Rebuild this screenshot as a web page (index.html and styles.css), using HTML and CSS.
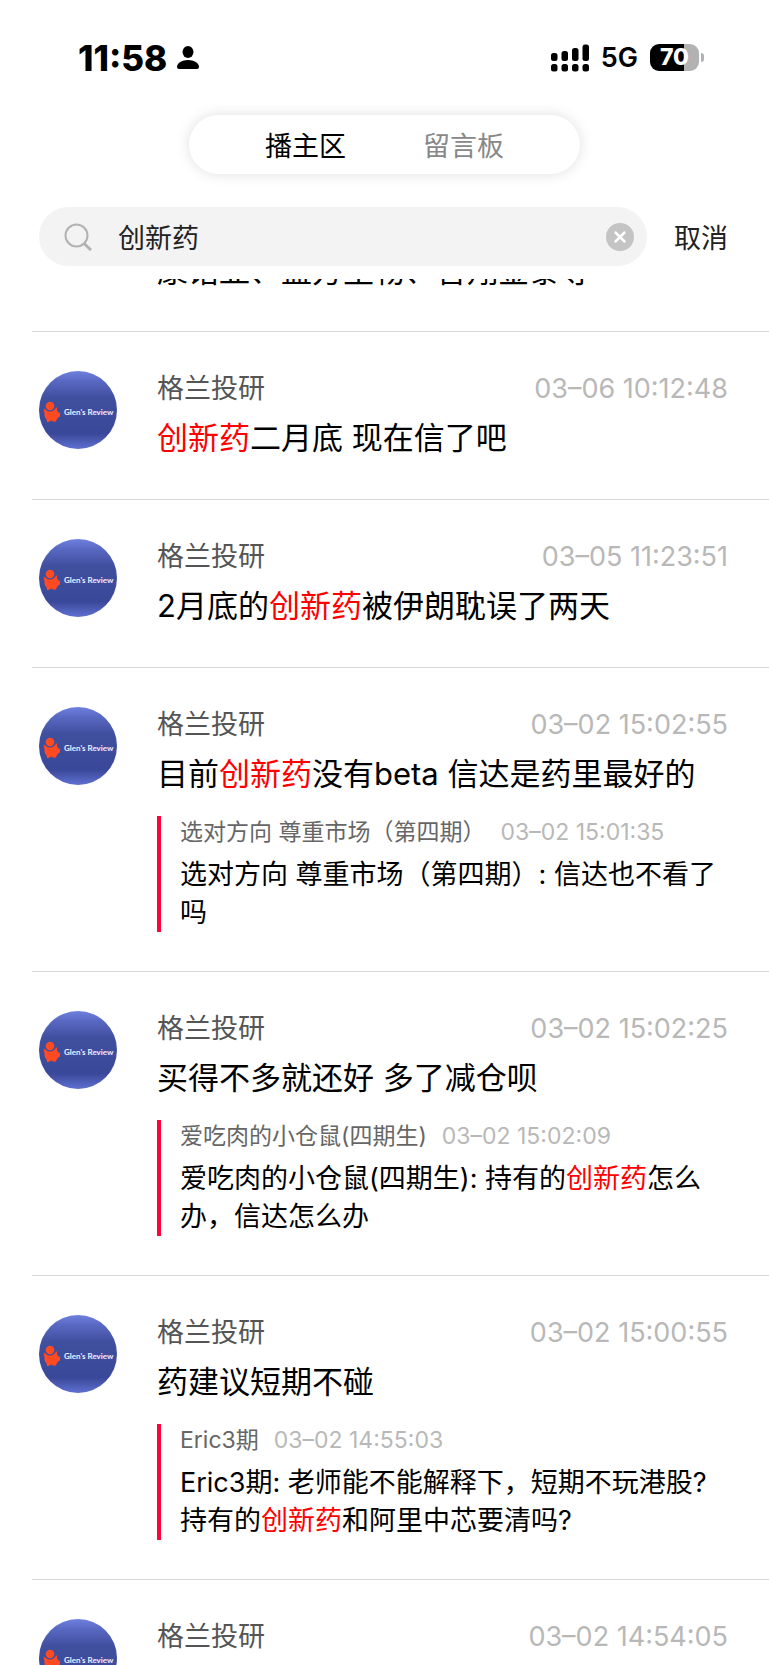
FILE: index.html
```html
<!DOCTYPE html>
<html lang="zh-CN">
<head>
    <meta charset="UTF-8">
    <meta name="viewport" content="width=device-width, initial-scale=1.0">
    <title>播主区</title>
    <link rel="stylesheet" href="styles.css">
</head>
<body>
    <!-- avatar, reused by every comment -->
    <svg class="defs" aria-hidden="true">
        <defs>
            <linearGradient id="sky" x1="0" y1="0" x2="0" y2="1">
                <stop offset="0" stop-color="#6f80df"/>
                <stop offset="0.12" stop-color="#5a6ac4"/>
                <stop offset="0.34" stop-color="#414f9f"/>
                <stop offset="0.8" stop-color="#3a4899"/>
                <stop offset="1" stop-color="#5f70d0"/>
            </linearGradient>
            <symbol id="avatar" viewBox="0 0 78 78">
                <circle cx="39" cy="39" r="39" fill="url(#sky)"/>
                <path d="M4.5 37.5L7 39q4 3 8 0l3-3v3.5l1.5 2 1.5.5v3.5l-2 1-1.5 2.5-.5 1.5h-3.5l-.5-1-2 .5-1 1H8l-.5-2.5Q5 46 5.5 42z" fill="#ff4a22"/>
                <circle cx="11" cy="35" r="5" fill="#414f9f"/>
                <circle cx="11" cy="35" r="4.3" fill="#ff4a22"/>
                <text x="25" y="44" font-size="8" font-weight="700" fill="#eef" font-family="Lato, sans-serif">Glen's Review</text>
            </symbol>
        </defs>
    </svg>

    <header>
        <div class="status-bar">
            <div class="status-left">
                <span class="clock">11:58</span>
                <svg width="22" height="24" viewBox="0 0 22 24"><ellipse cx="11" cy="6" rx="5.5" ry="6"/><path d="M0 21c0-4 5-7 11-7s11 3 11 7q0 2-2 2H2q-2 0-2-2z"/></svg>
            </div>
            <div class="status-right">
                <svg width="38" height="28" viewBox="0 0 38 28">
                    <rect x="0" y="9" width="6.5" height="8" rx="2.5"/><rect x="10.5" y="7" width="6.5" height="10" rx="2.5"/><rect x="21" y="4" width="6.5" height="13" rx="2.5"/><rect x="31.5" y="0.5" width="6.5" height="16.5" rx="2.5"/>
                    <rect x="0" y="20" width="6.5" height="7.5" rx="2.5"/><rect x="10.5" y="20" width="6.5" height="7.5" rx="2.5"/><rect x="21" y="20" width="6.5" height="7.5" rx="2.5"/><rect x="31.5" y="20" width="6.5" height="7.5" rx="2.5"/>
                </svg>
                <span class="network">5G</span>
                <div class="battery"><span class="battery-level">70</span><span class="battery-cap"></span></div>
            </div>
        </div>
        <nav class="tabs">
            <button class="tab active">播主区</button>
            <button class="tab">留言板</button>
        </nav>
        <form class="search">
            <div class="search-box">
                <svg width="28" height="28" viewBox="0 0 28 28" fill="none" stroke="#b2b2b2" stroke-width="2"><circle cx="12.5" cy="12.5" r="11"/><path d="M20 20.5l7 6.5" stroke-width="3"/></svg>
                <input type="text" value="创新药" aria-label="搜索">
                <button type="button" class="clear" aria-label="清除"><svg width="28" height="28" viewBox="0 0 28 28"><circle cx="14" cy="14" r="14" fill="#c4c4c4"/><path d="M9.5 9.5l9 9m0-9l-9 9" stroke="#fff" stroke-width="2.5" stroke-linecap="round"/></svg></button>
            </div>
            <button type="button" class="cancel">取消</button>
        </form>
    </header>

    <main>
        <div class="scrolled">
            <p class="text">康诺亚、益方生物、智翔金泰等</p>
        </div>

        <article class="comment">
            <svg class="avatar"><use href="#avatar"/></svg>
            <div class="body">
                <div class="meta"><span class="name">格兰投研</span><time>03–06 10:12:48</time></div>
                <p class="text"><mark>创新药</mark>二月底 现在信了吧</p>
            </div>
        </article>

        <article class="comment">
            <svg class="avatar"><use href="#avatar"/></svg>
            <div class="body">
                <div class="meta"><span class="name">格兰投研</span><time>03–05 11:23:51</time></div>
                <p class="text">2月底的<mark>创新药</mark>被伊朗耽误了两天</p>
            </div>
        </article>

        <article class="comment">
            <svg class="avatar"><use href="#avatar"/></svg>
            <div class="body">
                <div class="meta"><span class="name">格兰投研</span><time>03–02 15:02:55</time></div>
                <p class="text">目前<mark>创新药</mark>没有beta 信达是药里最好的</p>
                <blockquote>
                    <div class="quote-meta"><span>选对方向 尊重市场（第四期）</span><time>03–02 15:01:35</time></div>
                    <p>选对方向 尊重市场（第四期）: 信达也不看了吗</p>
                </blockquote>
            </div>
        </article>

        <article class="comment">
            <svg class="avatar"><use href="#avatar"/></svg>
            <div class="body">
                <div class="meta"><span class="name">格兰投研</span><time>03–02 15:02:25</time></div>
                <p class="text">买得不多就还好 多了减仓呗</p>
                <blockquote>
                    <div class="quote-meta"><span>爱吃肉的小仓鼠(四期生)</span><time>03–02 15:02:09</time></div>
                    <p>爱吃肉的小仓鼠(四期生): 持有的<mark>创新药</mark>怎么办，信达怎么办</p>
                </blockquote>
            </div>
        </article>

        <article class="comment">
            <svg class="avatar"><use href="#avatar"/></svg>
            <div class="body">
                <div class="meta"><span class="name">格兰投研</span><time>03–02 15:00:55</time></div>
                <p class="text">药建议短期不碰</p>
                <blockquote>
                    <div class="quote-meta"><span>Eric3期</span><time>03–02 14:55:03</time></div>
                    <p>Eric3期: 老师能不能解释下，短期不玩港股? 持有的<mark>创新药</mark>和阿里中芯要清吗?</p>
                </blockquote>
            </div>
        </article>

        <article class="comment">
            <svg class="avatar"><use href="#avatar"/></svg>
            <div class="body">
                <div class="meta"><span class="name">格兰投研</span><time>03–02 14:54:05</time></div>
            </div>
        </article>
    </main>
</body>
</html>
```
FILE: styles.css
```css
* {
    box-sizing: border-box;
}

body {
    display: flex;
    flex-direction: column;
    height: 100vh;
    margin: 0;
    overflow: hidden;
    background-color: #fff;
    color: #000;
    font-family: Inter, "Noto Sans CJK SC", sans-serif;
    font-size: 27px;
}

p, blockquote {
    margin: 0;
}

button, input {
    padding: 0;
    border: none;
    background: none;
    color: inherit;
    font: inherit;
}

svg {
    display: block;
    flex-shrink: 0;
}

.defs {
    position: absolute;
    width: 0;
    height: 0;
}

header {
    flex-shrink: 0;
    padding-bottom: 13px;
}

/* status bar */
.status-bar {
    display: flex;
    justify-content: space-between;
    align-items: center;
    height: 115px;
    padding: 0 65px 0 78px;
}

.status-left, .status-right {
    display: flex;
    align-items: center;
}

.status-left {
    gap: 10px;
}

.clock {
    font-size: 35px;
    font-weight: 800;
    line-height: 40px;
}

.status-right {
    gap: 12px;
}

.network {
    font-weight: 600;
}

.battery {
    display: flex;
    align-items: center;
    gap: 2px;
}

.battery-level {
    width: 49px;
    border-radius: 9px;
    background: linear-gradient(90deg, #000 70%, #b2b2b2 70%);
    color: #fff;
    font-size: 23px;
    font-weight: 800;
    line-height: 27px;
    text-align: center;
}

.battery-cap {
    width: 3px;
    height: 9px;
    border-radius: 0 4px 4px 0;
    background-color: #b2b2b2;
}

/* tabs */
.tabs {
    display: flex;
    justify-content: center;
    gap: 77px;
    width: 391px;
    height: 59px;
    margin: 0 auto;
    border-radius: 30px;
    box-shadow: 0 0 14px rgba(0, 0, 0, 0.13);
}

.tab {
    color: #888;
}

.tab.active {
    color: #000;
}

/* search */
.search {
    display: flex;
    gap: 27px;
    margin: 33px 41px 0 39px;
    color: #222;
}

.search-box {
    display: flex;
    flex: 1;
    align-items: center;
    gap: 26px;
    height: 59px;
    padding: 0 13px 0 25px;
    border-radius: 30px;
    background-color: #f3f3f3;
}

.search-box input {
    flex: 1;
    min-width: 0;
    outline: none;
}

/* comments */
main {
    flex: 1;
    min-height: 0;
    overflow: hidden;
}

.scrolled {
    display: flex;
    align-items: flex-end;
    height: 52px;
    padding: 0 41px 38px 157px;
    overflow: hidden;
}

.comment {
    display: flex;
    gap: 40px;
    margin-left: 32px;
    padding: 39px 41px 39px 7px;
    border-top: 1px solid #d8d8d8;
}

.avatar {
    width: 78px;
    height: 78px;
}

.body {
    flex: 1;
}

.meta {
    display: flex;
    justify-content: space-between;
    line-height: 36px;
}

.name {
    color: #555;
}

time {
    color: #b8b8b8;
}

.text {
    margin-top: 9px;
    font-size: 31px;
    line-height: 44px;
}

mark {
    background: none;
    color: #f00;
}

blockquote {
    margin-top: 20px;
    padding-left: 19px;
    border-left: 4px solid #ff0436;
    line-height: 38px;
}

.quote-meta {
    display: flex;
    gap: 15px;
    margin-bottom: 8px;
    color: #666;
    font-size: 23px;
    line-height: 32px;
}
```
